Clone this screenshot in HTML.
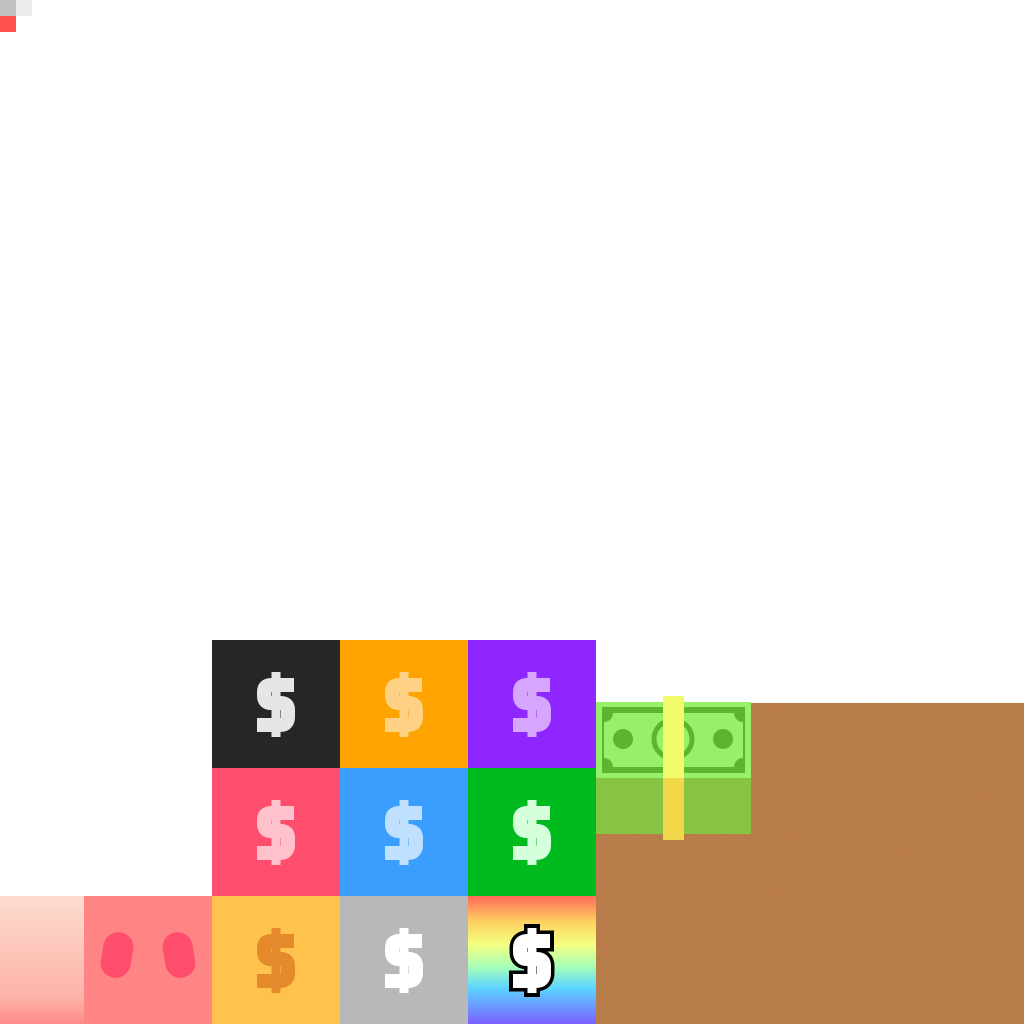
<!DOCTYPE html>
<html><head><meta charset="utf-8"><style>
html,body{margin:0;padding:0;background:#fff;width:1024px;height:1024px;overflow:hidden;position:relative}
.a{position:absolute}
.t{position:absolute;width:128px;height:128px}
.t svg{display:block}
</style></head><body>
<div class="a" style="left:0;top:0;width:16px;height:16px;background:#c2c2c2"></div>
<div class="a" style="left:16px;top:0;width:16px;height:16px;background:#ebebeb"></div>
<div class="a" style="left:0;top:16px;width:16px;height:16px;background:#ff4f4f"></div>

<svg class="a" style="left:596px;top:703px" width="428" height="321">
<filter id="n" x="0" y="0" width="100%" height="100%"><feTurbulence type="fractalNoise" baseFrequency="0.8" numOctaves="2" seed="3"/><feColorMatrix type="matrix" values="0 0 0 0 0.42  0 0 0 0 0.24  0 0 0 0 0.1  2 0 0 0 -0.8"/></filter>
<rect width="428" height="321" fill="#bb7a45"/>
<rect width="428" height="321" filter="url(#n)"/>
</svg>

<div class="a" style="left:596px;top:702px;width:155px;height:76px;background:#96f06a"></div>
<svg class="a" style="left:596px;top:702px" width="155" height="76">
<rect x="6" y="5" width="143" height="66" fill="#5cb52e"/>
<path d="M17,11 H138 A9,9 0 0 0 147,20 V56 A9,9 0 0 0 138,65 H17 A9,9 0 0 0 8,56 V20 A9,9 0 0 0 17,11Z" fill="#96f06a"/>
<circle cx="27" cy="37" r="10" fill="#5cb52e"/>
<circle cx="127" cy="37" r="10" fill="#5cb52e"/>
<circle cx="77" cy="37" r="19" fill="none" stroke="#5cb52e" stroke-width="5"/>
</svg>
<div class="a" style="left:596px;top:778px;width:155px;height:56px;background:#88c442"></div>
<div class="a" style="left:663px;top:696px;width:21px;height:82px;background:#f2fb6c"></div>
<div class="a" style="left:663px;top:778px;width:21px;height:62px;background:#f0d84a"></div>

<div class="a" style="left:0;top:896px;width:84px;height:128px;background:linear-gradient(#fddcd0 0%,#fdc8bb 40%,#fdb2a8 80%,#ff8a8a 100%)"></div>
<div class="a" style="left:84px;top:896px;width:128px;height:128px;background:#ff8585">
<svg width="128" height="128"><g fill="#ff4d6d">
<rect x="18" y="36" width="30" height="46" rx="15" transform="rotate(10 33 59)"/>
<rect x="80" y="36" width="30" height="46" rx="15" transform="rotate(-10 95 59)"/>
</g></svg></div>

<svg width="0" height="0" style="position:absolute"><defs>
<g id="d"><path d="M64,32 V97" stroke-width="9" fill="none"/><path d="M82,45 H59 Q52,45 52,52 V56 Q52,63 59,63 H69 Q76,63 76,70 V77 Q76,85 68,85 H45" stroke-width="14" fill="none" stroke-linejoin="round"/></g>
<linearGradient id="rb" x1="0" y1="0" x2="0" y2="1">
<stop offset="0" stop-color="#ff6a5a"/><stop offset="0.2" stop-color="#ffd060"/><stop offset="0.38" stop-color="#f4ff80"/><stop offset="0.55" stop-color="#a8ffb8"/><stop offset="0.72" stop-color="#5cd4ff"/><stop offset="1" stop-color="#7a60ff"/></linearGradient>
</defs></svg>

<div class="t" style="left:212px;top:640px;background:#262626"><svg width="128" height="128"><use href="#d" stroke="#e6e6e6"/></svg></div>
<div class="t" style="left:340px;top:640px;background:#ffa300"><svg width="128" height="128"><use href="#d" stroke="#ffd184"/></svg></div>
<div class="t" style="left:468px;top:640px;background:#9026ff"><svg width="128" height="128"><use href="#d" stroke="#d6a6ff"/></svg></div>
<div class="t" style="left:212px;top:768px;background:#ff4d6d"><svg width="128" height="128"><use href="#d" stroke="#ffc2cd"/></svg></div>
<div class="t" style="left:340px;top:768px;background:#3a9eff"><svg width="128" height="128"><use href="#d" stroke="#bfe0ff"/></svg></div>
<div class="t" style="left:468px;top:768px;background:#00bb1e"><svg width="128" height="128"><use href="#d" stroke="#d6ffdc"/></svg></div>
<div class="t" style="left:212px;top:896px;background:#ffc34d"><svg width="128" height="128"><use href="#d" stroke="#e48a2c"/></svg></div>
<div class="t" style="left:340px;top:896px;background:#b8b8b8"><svg width="128" height="128"><use href="#d" stroke="#ffffff"/></svg></div>
<div class="t" style="left:468px;top:896px"><svg width="128" height="128"><rect width="128" height="128" fill="url(#rb)"/>
<g stroke="#000" stroke-linejoin="round"><path d="M64,28 V101" stroke-width="16" fill="none"/><path d="M86,45 H59 Q52,45 52,52 V56 Q52,63 59,63 H69 Q76,63 76,70 V77 Q76,85 68,85 H41" stroke-width="21" fill="none"/></g>
<use href="#d" stroke="#fff"/></svg></div>
</body></html>
